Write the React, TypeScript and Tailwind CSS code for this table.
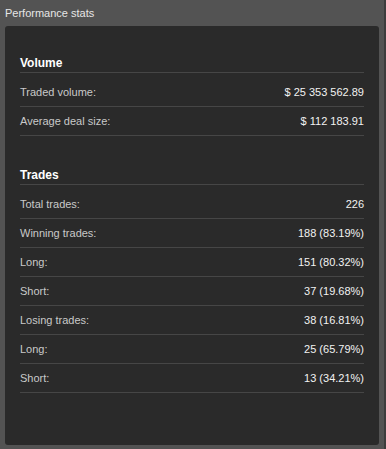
const volume = [
  { label: 'Traded volume:', value: '$ 25 353 562.89' },
  { label: 'Average deal size:', value: '$ 112 183.91' },
]

const trades = [
  { label: 'Total trades:', value: '226' },
  { label: 'Winning trades:', value: '188 (83.19%)' },
  { label: 'Long:', value: '151 (80.32%)' },
  { label: 'Short:', value: '37 (19.68%)' },
  { label: 'Losing trades:', value: '38 (16.81%)' },
  { label: 'Long:', value: '25 (65.79%)' },
  { label: 'Short:', value: '13 (34.21%)' },
]

function Section({ title, rows, className }: { title: string; rows: { label: string; value: string }[]; className: string }) {
  return (
    <div className={className}>
      <div className="flex h-[20px] items-center border-b border-[#464646] text-[12px] font-bold text-white">
        {title}
      </div>
      <div className="mt-[5px]">
        {rows.map((row, i) => (
          <div
            key={i}
            className="flex h-[29px] items-center justify-between border-b border-[#464646] text-[11px]"
          >
            <span className="text-[#c9c9c9]">{row.label}</span>
            <span className="text-[#f2f2f2]">{row.value}</span>
          </div>
        ))}
      </div>
    </div>
  )
}

export default function App() {
  return (
    <div
      className="flex h-[449px] w-[386px] flex-col border-r-2 border-[#3c3c3c] bg-[#535353] px-[5px] pb-[4px]"
      style={{ fontFamily: '"Liberation Sans", Arial, sans-serif' }}
    >
      <div className="flex h-[26px] items-center text-[11px] text-[#e6e6e6]">Performance stats</div>
      <div className="flex-1 rounded-[3px] bg-[#2a2a2a] px-[15px]">
        <Section title="Volume" rows={volume} className="mt-[27px]" />
        <Section title="Trades" rows={trades} className="mt-[29px]" />
      </div>
    </div>
  )
}
